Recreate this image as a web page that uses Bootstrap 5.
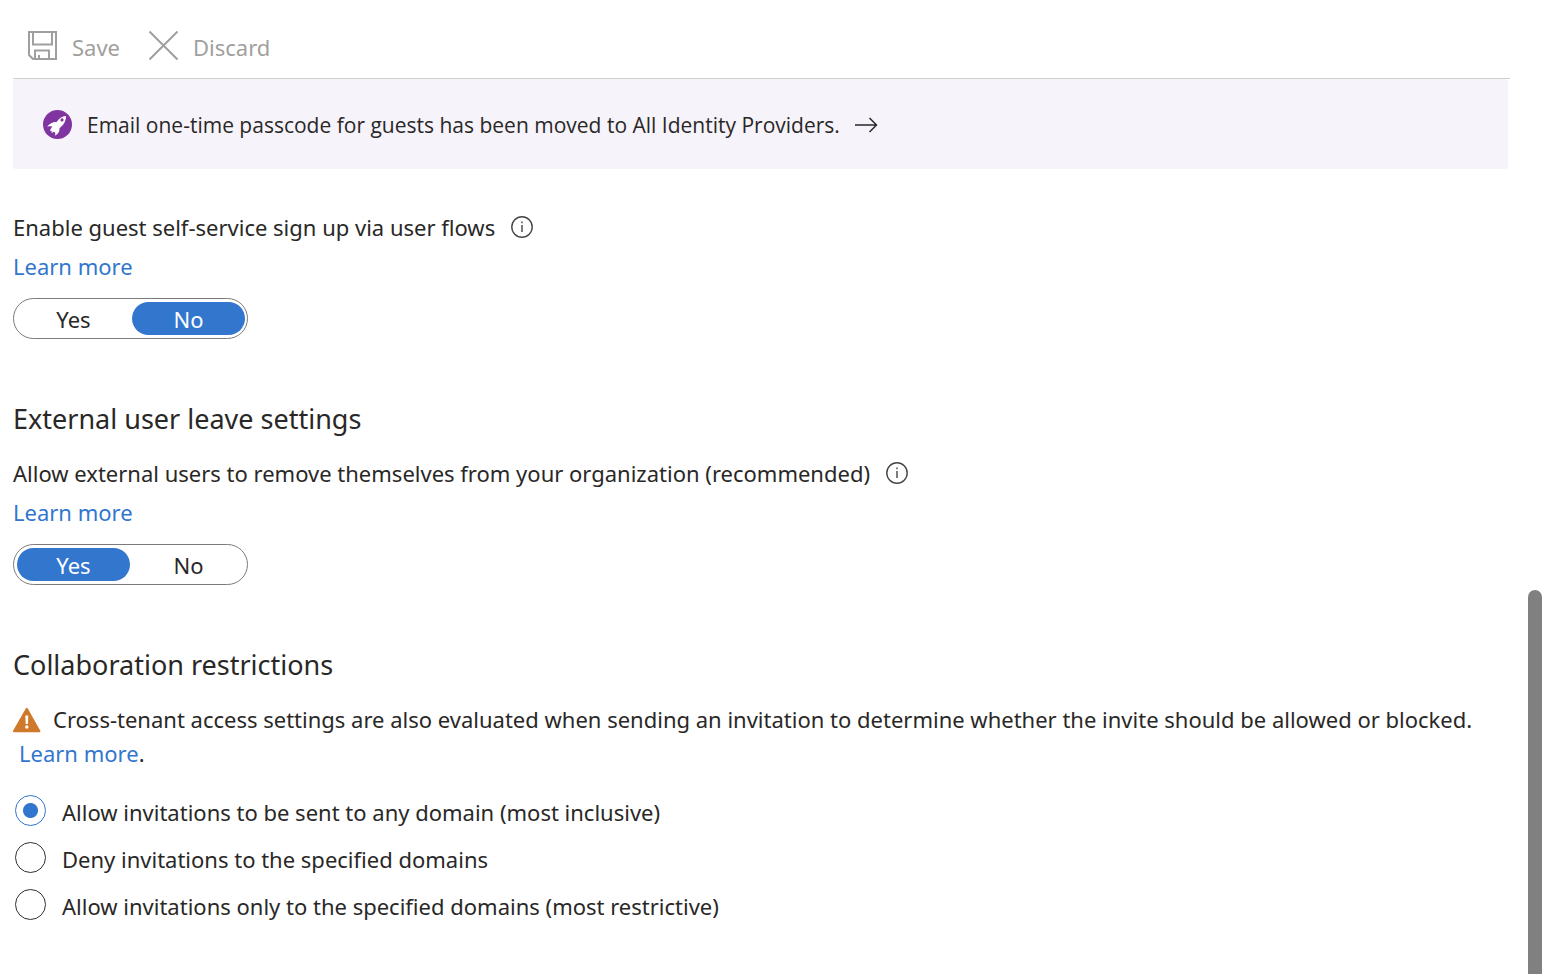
<!DOCTYPE html>
<html lang="en">
<head>
<meta charset="utf-8">
<meta name="viewport" content="width=device-width, initial-scale=1">
<title>External collaboration settings</title>
<link href="https://cdn.jsdelivr.net/npm/bootstrap@5.3.0/dist/css/bootstrap.min.css" rel="stylesheet">
<style>
  :root { --accent: #3276ce; --ink: #292827; --muted: #a19f9d; }
  body { font-family: "Noto Sans", "Open Sans", sans-serif; font-size: 22px; line-height: 34px; color: var(--ink); background: #fff; }
  a { color: var(--accent); text-decoration: none; }
  .pane { padding: 14px 18px 40px 13px; min-width: 0; }
  .toolbar { height: 65px; padding-left: 14px; gap: 28px; border-bottom: 1px solid #d2d0ce; }
  .tool { border: 0; background: none; padding: 0; gap: 14px; color: var(--muted); }
  .tool:disabled { color: var(--muted); opacity: 1; border: 0; }
  .tool span { padding-top: 2px; }
  .notice { min-height: 90px; margin-right: 2px; padding: 1px 29px 0; gap: 15px; background: #f7f3fa; border-radius: 3px; font-family: "Open Sans", "Noto Sans", sans-serif; font-size: 21px; }
  .field { margin: 41px 0 0; }
  .caption-row { gap: 16px; }
  .more { margin: 5px 0 15px; }
  .toggle { display: inline-flex; gap: 2px; padding: 3px 2px 3px 3px; border: 1px solid #7d7b79; border-radius: 21px; }
  .toggle .btn { width: 113px; padding: 1px 0 0; border: 0; border-radius: 17px; font-size: 22px; line-height: 32px; color: var(--ink); }
  .toggle .btn-check:checked + .btn { background: var(--accent); color: #fff; }
  h2 { font-size: 27px; line-height: 38px; font-weight: 400; margin: 61px 0 0; }
  .after-title { margin-top: 18px; }
  .warning { margin: 18px 0 23px; }
  .warning svg { margin: 0 12px 0 0; vertical-align: -5px; }
  .warning a { margin-left: 6px; }
  .choices { gap: 13px; padding-left: 2px; }
  .choice { gap: 16px; }
  .choice label { padding-top: 4px; line-height: 30px; }
  .choice .form-check-input { width: 31px; height: 31px; margin: 0; border: 1px solid #323130; background: #fff; flex: none; }
  .choice .form-check-input:checked { border-color: var(--accent); background: radial-gradient(circle, var(--accent) 7px, #fff 8px); }
  .rail { width: 14px; margin-right: 4px; }
  .thumb { height: 384px; background: #808080; border-radius: 7px 7px 0 0; }
</style>
</head>
<body>
<div class="d-flex vh-100 overflow-hidden">
  <main class="pane flex-grow-1">
    <div class="toolbar d-flex align-items-center" role="toolbar" aria-label="Commands">
      <button class="tool d-flex align-items-center" type="button" disabled>
        <svg width="31" height="31" viewBox="0 0 31 31" fill="none" stroke="currentColor" stroke-width="2" aria-hidden="true"><path d="M2 1h27v27H6l-4-4zM6 1v12.500h19V1M8 28v-8.500h14V28M12 28v-4"/></svg>
        <span>Save</span>
      </button>
      <button class="tool d-flex align-items-center" type="button" disabled>
        <svg width="31" height="31" viewBox="0 0 31 31" fill="none" stroke="currentColor" stroke-width="2" aria-hidden="true"><path d="M1.500 .5l28 28M29.500 .5l-28 28"/></svg>
        <span>Discard</span>
      </button>
    </div>
    <div class="notice d-flex align-items-center">
      <svg width="30" height="30" viewBox="0 0 30 30" aria-hidden="true"><circle cx="15.500" cy="14.500" r="14.500" fill="#7f34a2"/><path fill="#fff" fill-rule="evenodd" d="M24 6c-4.200.3-7 2.400-9.600 6.200-2.500-.6-6.600 1.300-9.400 4.600 1.800-.5 3.600-.6 5.200-.3L8 20.200l1.200 1.200 1.100-.4-.9 2.300 2.600-1.500 1 .7c.4 1.200.3 2 0 3.300 3-2 5-4.400 4.400-7.600C21.500 15.300 24 11.500 24 6zM20 8.300a1.600 1.600 0 1 1 0 3.200 1.600 1.600 0 0 1 0-3.200z"/></svg>
      <span>Email one-time passcode for guests has been moved to All Identity Providers.</span>
      <svg width="23" height="16" viewBox="0 0 23 16" fill="none" stroke="currentColor" stroke-width="1.500" aria-hidden="true"><path d="M0 8h21.500M14.500 1l7 7-7 7"/></svg>
    </div>

    <section class="field">
      <div class="caption-row d-flex align-items-center">
        <span id="signup">Enable guest self-service sign up via user flows</span>
        <svg width="22" height="22" viewBox="0 0 22 22" fill="none" stroke="#484644" stroke-width="1.400" aria-hidden="true"><circle cx="11" cy="11" r="10.200"/><path d="M11 9v7M11 5.500v1.700"/></svg>
      </div>
      <div class="more"><a href="#">Learn more</a></div>
      <div class="toggle" role="radiogroup" aria-labelledby="signup">
        <input class="btn-check" type="radio" name="signup" id="signup-yes"><label class="btn" for="signup-yes">Yes</label>
        <input class="btn-check" type="radio" name="signup" id="signup-no" checked><label class="btn" for="signup-no">No</label>
      </div>
    </section>

    <h2>External user leave settings</h2>
    <section class="after-title">
      <div class="caption-row d-flex align-items-center">
        <span id="leave">Allow external users to remove themselves from your organization (recommended)</span>
        <svg width="22" height="22" viewBox="0 0 22 22" fill="none" stroke="#484644" stroke-width="1.400" aria-hidden="true"><circle cx="11" cy="11" r="10.200"/><path d="M11 9v7M11 5.500v1.700"/></svg>
      </div>
      <div class="more"><a href="#">Learn more</a></div>
      <div class="toggle" role="radiogroup" aria-labelledby="leave">
        <input class="btn-check" type="radio" name="leave" id="leave-yes" checked><label class="btn" for="leave-yes">Yes</label>
        <input class="btn-check" type="radio" name="leave" id="leave-no"><label class="btn" for="leave-no">No</label>
      </div>
    </section>

    <h2 id="restrict">Collaboration restrictions</h2>
    <p class="warning"><svg width="28" height="26" viewBox="0 0 28 26" aria-hidden="true"><path fill="#cf7a2b" d="M12.800 1.500q1-1.500 2 0L27.200 23.500q.7 1.800-1 1.800H1.200q-1.700 0-1-1.800z"/><path fill="#fff" d="M12.300 8.500h3l-.4 8.500h-2.200z"/><circle cx="13.800" cy="20" r="1.700" fill="#fff"/></svg>Cross-tenant access settings are also evaluated when sending an invitation to determine whether the invite should be allowed or blocked. <a href="#">Learn&nbsp;more</a>.</p>
    <div class="choices d-flex flex-column" role="radiogroup" aria-labelledby="restrict">
      <div class="choice d-flex align-items-center"><input class="form-check-input" type="radio" name="domains" id="any" checked><label for="any">Allow invitations to be sent to any domain (most inclusive)</label></div>
      <div class="choice d-flex align-items-center"><input class="form-check-input" type="radio" name="domains" id="deny"><label for="deny">Deny invitations to the specified domains</label></div>
      <div class="choice d-flex align-items-center"><input class="form-check-input" type="radio" name="domains" id="allow"><label for="allow">Allow invitations only to the specified domains (most restrictive)</label></div>
    </div>
  </main>
  <div class="rail d-flex flex-column justify-content-end flex-shrink-0" aria-hidden="true"><div class="thumb"></div></div>
</div>
<script src="https://cdn.jsdelivr.net/npm/bootstrap@5.3.0/dist/js/bootstrap.bundle.min.js"></script>
</body>
</html>
